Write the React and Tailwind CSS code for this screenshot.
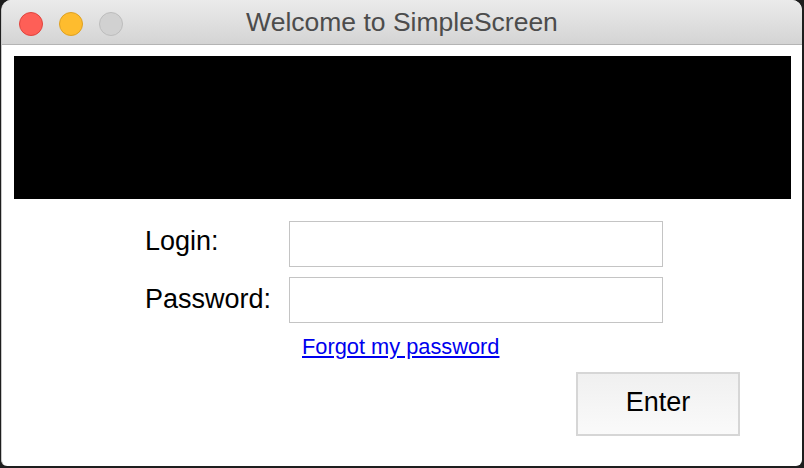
export default function App() {
  return (
    <div className="w-[804px] h-[468px] bg-[#1e1e1e] overflow-hidden" style={{ fontFamily: '"Liberation Sans", Arial, sans-serif' }}>
      <div className="ml-[1px] w-[801px] h-[466px] rounded-t-[10px] rounded-b-[6px] overflow-hidden bg-white flex flex-col border-l border-[#c8c8c8]">
        <div className="h-[45px] shrink-0 bg-gradient-to-b from-[#ebebeb] to-[#d4d4d4] border-b border-[#b4b4b4] relative flex items-center">
          <div className="flex items-center gap-[16px] pl-[17px] pt-[4px]">
            <div className="w-[24px] h-[24px] rounded-full bg-[#fe5f57] border border-[#e0443e]" />
            <div className="w-[24px] h-[24px] rounded-full bg-[#febc2e] border border-[#dea123]" />
            <div className="w-[24px] h-[24px] rounded-full bg-[#d1d1d1] border border-[#bdbdbd]" />
          </div>
          <div className="absolute inset-0 flex items-center justify-center text-[26.5px] text-[#4c4c4c] pt-[2px]">
            Welcome to SimpleScreen
          </div>
        </div>
        <div className="flex-1 flex flex-col px-[12px] pt-[11px]">
          <div className="h-[143px] w-[777px] bg-black" />
          <div className="flex flex-col pl-[131px] pt-[22px]">
            <div className="flex items-center h-[46px]">
              <div className="w-[144px] text-[27px] text-black leading-none pb-[5px]">Login:</div>
              <div className="w-[374px] h-[46px] border border-[#c4c4c4] bg-white" />
            </div>
            <div className="flex items-center h-[46px] mt-[10px]">
              <div className="w-[144px] text-[27px] text-black leading-none pb-[2px]">Password:</div>
              <div className="w-[374px] h-[46px] border border-[#c4c4c4] bg-white" />
            </div>
            <div className="pl-[157px] mt-[11px] h-[26px] flex items-center">
              <a href="#" className="text-[21.8px] text-[#0000ee] underline leading-none">Forgot my password</a>
            </div>
          </div>
          <div className="flex justify-end pr-[50px] mt-[12px]">
            <button className="w-[164px] h-[64px] border-2 border-[#d6d6d6] bg-gradient-to-b from-[#f0f0f0] to-[#fafafa] text-[27px] text-black leading-none pb-[4px]">
              Enter
            </button>
          </div>
        </div>
      </div>
    </div>
  );
}
